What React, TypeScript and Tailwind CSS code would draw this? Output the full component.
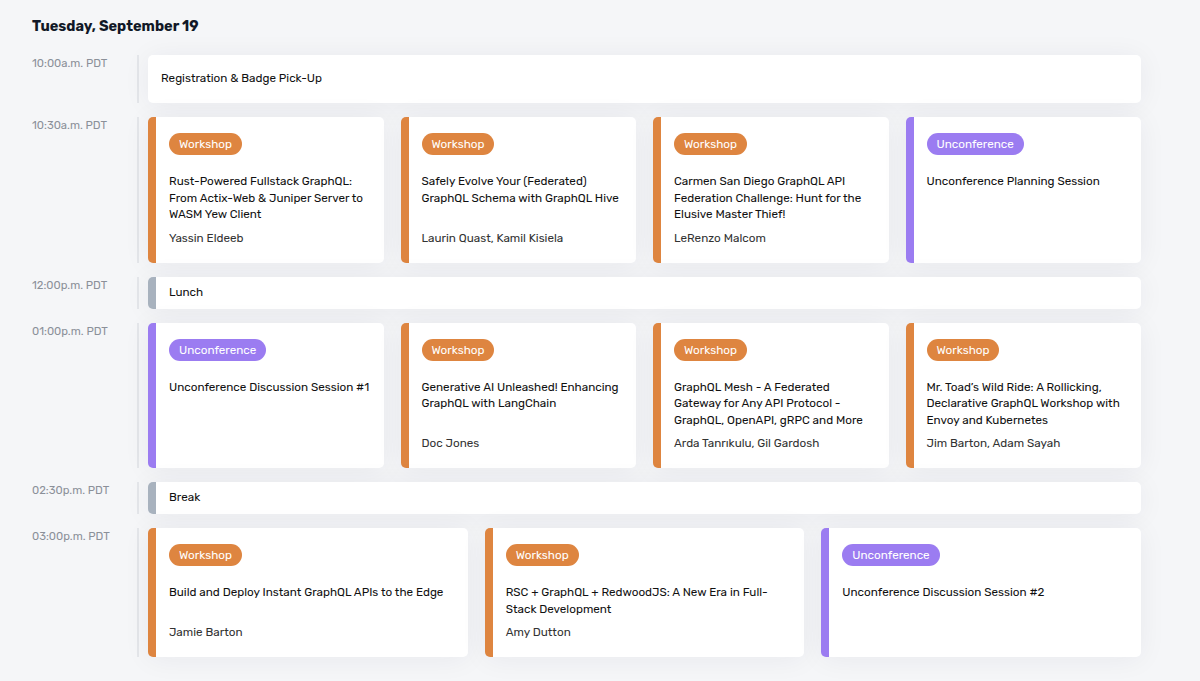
const font = { fontFamily: 'Rubik, Inter, "Noto Sans", sans-serif' };

type Kind = 'workshop' | 'unconference';

type Session = {
  kind: Kind;
  title: string;
  speakers?: string;
};

type Row =
  | { time: string; type: 'plain'; title: string }
  | { time: string; type: 'break'; title: string }
  | { time: string; type: 'sessions'; cols: 3 | 4; sessions: Session[] };

const rows: Row[] = [
  { time: '10:00a.m. PDT', type: 'plain', title: 'Registration & Badge Pick-Up' },
  {
    time: '10:30a.m. PDT',
    type: 'sessions',
    cols: 4,
    sessions: [
      {
        kind: 'workshop',
        title: 'Rust-Powered Fullstack GraphQL: From Actix-Web & Juniper Server to WASM Yew Client',
        speakers: 'Yassin Eldeeb',
      },
      {
        kind: 'workshop',
        title: 'Safely Evolve Your (Federated) GraphQL Schema with GraphQL Hive',
        speakers: 'Laurin Quast, Kamil Kisiela',
      },
      {
        kind: 'workshop',
        title: 'Carmen San Diego GraphQL API Federation Challenge: Hunt for the Elusive Master Thief!',
        speakers: 'LeRenzo Malcom',
      },
      { kind: 'unconference', title: 'Unconference Planning Session' },
    ],
  },
  { time: '12:00p.m. PDT', type: 'break', title: 'Lunch' },
  {
    time: '01:00p.m. PDT',
    type: 'sessions',
    cols: 4,
    sessions: [
      { kind: 'unconference', title: 'Unconference Discussion Session #1' },
      {
        kind: 'workshop',
        title: 'Generative AI Unleashed! Enhancing GraphQL with LangChain',
        speakers: 'Doc Jones',
      },
      {
        kind: 'workshop',
        title: 'GraphQL Mesh - A Federated Gateway for Any API Protocol - GraphQL, OpenAPI, gRPC and More',
        speakers: 'Arda Tanrıkulu, Gil Gardosh',
      },
      {
        kind: 'workshop',
        title: 'Mr. Toad’s Wild Ride: A Rollicking, Declarative GraphQL Workshop with Envoy and Kubernetes',
        speakers: 'Jim Barton, Adam Sayah',
      },
    ],
  },
  { time: '02:30p.m. PDT', type: 'break', title: 'Break' },
  {
    time: '03:00p.m. PDT',
    type: 'sessions',
    cols: 3,
    sessions: [
      {
        kind: 'workshop',
        title: 'Build and Deploy Instant GraphQL APIs to the Edge',
        speakers: 'Jamie Barton',
      },
      {
        kind: 'workshop',
        title: 'RSC + GraphQL + RedwoodJS: A New Era in Full-Stack Development',
        speakers: 'Amy Dutton',
      },
      { kind: 'unconference', title: 'Unconference Discussion Session #2' },
    ],
  },
];

const cardShadow = 'shadow-[0_2px_28px_rgba(30,40,60,0.06)]';

function SessionCard({ s }: { s: Session }) {
  const workshop = s.kind === 'workshop';
  return (
    <div
      className={`flex flex-col rounded-[5px] bg-white border-l-8 pl-[13px] pr-3 pt-4 pb-[17px] ${cardShadow} ${
        workshop ? 'border-[#de8540]' : 'border-[#9b7cf1]'
      }`}
    >
      <span
        className={`self-start rounded-full px-[10px] h-[22px] leading-[22px] text-[11.7px] text-white ${
          workshop ? 'bg-[#de8540]' : 'bg-[#9b7cf1]'
        }`}
      >
        {workshop ? 'Workshop' : 'Unconference'}
      </span>
      <p className="mt-[18px] text-[11.7px] leading-[16.5px] text-[#111]">{s.title}</p>
      {s.speakers && (
        <p className="mt-auto pt-[7px] text-[11.7px] leading-4 text-[#333]">{s.speakers}</p>
      )}
    </div>
  );
}

export default function App() {
  return (
    <div className="min-h-screen bg-[#f5f6f8] pl-8 pr-[59px] pt-4 pb-10" style={font}>
      <h2 className="text-[14.5px] leading-5 font-bold text-[#111827]">Tuesday, September 19</h2>

      <div className="mt-[19px] flex flex-col gap-[14px]">
        {rows.map((row) => (
          <div key={row.time} className="flex">
            <div className="w-[105px] shrink-0 pt-[1px] text-[11.3px] leading-[14px] text-[#8b9099]">
              {row.time}
            </div>
            <div className="flex-1 border-l-2 border-[#e4e6ea] pl-[9px]">
              {row.type === 'plain' && (
                <div
                  className={`h-12 flex items-center rounded-[5px] bg-white px-[13px] text-[11.7px] text-[#111] ${cardShadow}`}
                >
                  {row.title}
                </div>
              )}
              {row.type === 'break' && (
                <div
                  className={`h-8 flex items-center rounded-[5px] bg-white border-l-8 border-[#a8b2be] pl-[13px] text-[11.7px] text-[#111] ${cardShadow}`}
                >
                  {row.title}
                </div>
              )}
              {row.type === 'sessions' && (
                <div
                  className={`grid gap-[17px] ${row.cols === 4 ? 'grid-cols-4' : 'grid-cols-3'}`}
                >
                  {row.sessions.map((s) => (
                    <SessionCard key={s.title} s={s} />
                  ))}
                </div>
              )}
            </div>
          </div>
        ))}
      </div>
    </div>
  );
}
